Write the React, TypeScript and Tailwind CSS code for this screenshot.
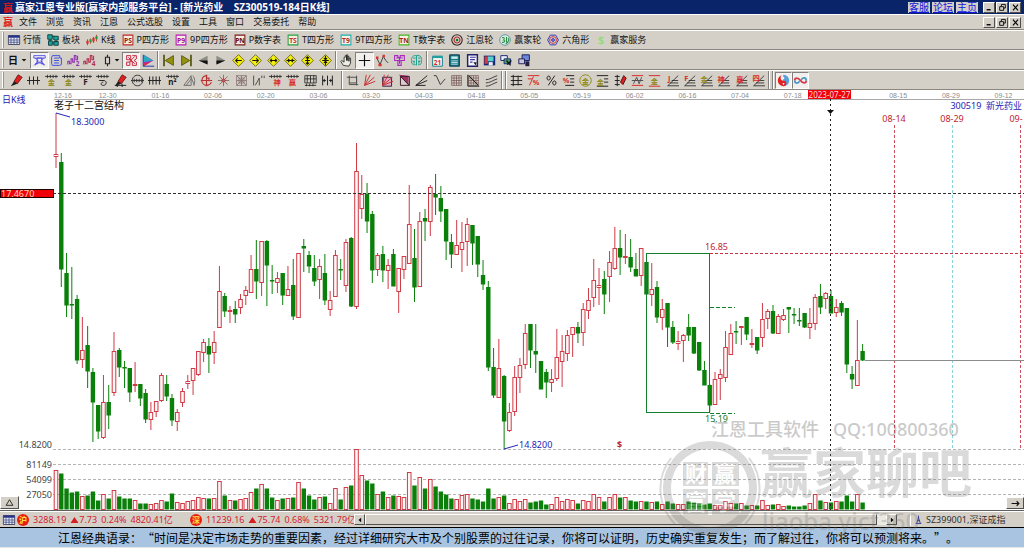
import React from 'react';

type Part = { d?: string; c?: string; f?: string; w?: number; t?: string; x?: number; y?: number; s?: number };
type Tool = { label: string; parts: Part[]; pressed?: boolean };

const K = '#222222';
const RED = '#d92a2a';
const OLIVE = '#8f8a18';

const sans = "font-['Noto_Sans','Noto_Sans_CJK_SC',sans-serif]";
const cjk = "font-['Noto_Sans_CJK_SC',sans-serif]";

const Icon: React.FC<{ parts: Part[]; className?: string }> = ({ parts, className = 'h-[14px] w-[14px]' }) => (
  <svg viewBox="0 0 16 16" className={`shrink-0 overflow-visible ${className}`} aria-hidden="true">
    {parts.map((p, i) =>
      p.t ? (
        <text key={i} x={p.x ?? 8} y={p.y ?? 12} fontSize={p.s ?? 9} fontWeight="bold" textAnchor="middle" fill={p.c ?? K}>
          {p.t}
        </text>
      ) : (
        <path key={i} d={p.d} fill={p.f ?? 'none'} stroke={p.c ?? 'none'} strokeWidth={p.w ?? 1.2} />
      )
    )}
  </svg>
);

const boxed = (t: string, border: string, color: string): Part[] => [
  { d: 'M1.5 1.5h13v13h-13z', c: border, f: '#f6efe2', w: 1.4 },
  { t, c: color, y: 11.5, s: 9 },
];

const diamond = (d: string): Part[] => [
  { d: 'M8 .8L15.2 8L8 15.2L.8 8z', c: '#5e5c00', f: '#f4ef10', w: 1 },
  { d, c: '#111111', w: 1.3 },
];

const comb: Part = { d: 'M0 3h16M3 1v4M6.5 1v4M10 1v4M13.5 1v4', c: K, w: 1 };
const fan: Part = { d: 'M2 14.5h14M2 14.5L15 2M5 11h10M7 8h8', c: K, w: 1 };

const gridIcon: Part[] = [
  { d: 'M.5 2h15v12h-15z', c: '#222244', f: '#e8ecf4', w: 1 },
  { d: 'M.5 2h15v3h-15z', f: '#24328c' },
  { d: 'M4 5v9M8 5v9M12 5v9M1 8h14M1 11h14', c: '#3b4a86', w: 1 },
];

const quickLinks: Tool[] = [
  { label: '行情', parts: gridIcon },
  {
    label: '板块',
    parts: [
      { d: 'M1 1h6v6H1zM9 3h6v5H9zM2 9h5v6H2zM9 10h6v5H9z', c: '#0b3c3c', f: '#19a7a0' },
      { d: 'M7 3h3M4 7v3M7 12h3M12 8v3', c: '#0b3c3c', w: 1.5 },
    ],
  },
  {
    label: 'K线',
    parts: [
      { d: 'M2 7v8M6 6v7M10 4v8M14 1v9', c: '#b0281c', w: 1 },
      { d: 'M.5 9h3v4h-3zM8.500 5h3v5h-3z', f: '#e02a2a' },
      { d: 'M4.500 7h3v4h-3zM12.500 3h3v4h-3z', f: '#16a03a' },
    ],
  },
  { label: 'P四方形', parts: boxed('PS', '#c02828', '#8a1c1c') },
  { label: '9P四方形', parts: boxed('P9', '#b818b8', '#a01090') },
  { label: 'P数字表', parts: boxed('PN', '#7c1c1c', '#6c1010') },
  { label: 'T四方形', parts: boxed('TS', '#22a444', '#c03424') },
  { label: '9T四方形', parts: boxed('T9', '#18b0b0', '#b02828') },
  { label: 'T数字表', parts: boxed('TN', '#48b428', '#a02020') },
  {
    label: '江恩轮',
    parts: [
      { d: 'M8 1a7 7 0 1 0 .01 0z', c: '#3a2a2a', w: 1.4 },
      { d: 'M8 4a4 4 0 1 0 .01 0z', c: '#b02020', w: 1.4 },
      { d: 'M8 7a1 1 0 1 0 .01 0z', c: '#187028', w: 1.6 },
    ],
  },
  {
    label: '赢家轮',
    parts: [
      { d: 'M8 1a7 7 0 1 0 .01 0z', c: '#4c8c9c', f: '#dcebdc', w: 1.2 },
      { d: 'M4 5c3-1 4 1 2 3c3 0 2 4-2 3M10 4v7M12 5c2 2 1 6-3 8', c: '#2c8c4c', w: 1.4 },
    ],
  },
  {
    label: '六角形',
    parts: [
      { d: 'M4.5 1.5h7L15.2 8l-3.7 6.5h-7L.8 8z', c: '#3838b8', w: 1.3 },
      { d: 'M8 3.5a4.5 4.5 0 1 0 .01 0z', c: '#d03030', w: 1.3 },
      { d: 'M8 6a2 2 0 1 0 .01 0z', c: '#3838b8', f: '#7070e0', w: 1.2 },
    ],
  },
  { label: '赢家服务', parts: [{ t: '$', c: '#8fdc84', y: 13, s: 14 }] },
];

const periodTools: Tool[] = [
  {
    label: '叠加',
    pressed: true,
    parts: [{ d: 'M1 2h14v3H1zM3 5l3 3l-3 6M13 5l-3 3l3 6M5 5h6v5H5zM3 12h3M10 12h3M1 14c3-4 11-4 14 0', c: '#3c3ce0', w: 1 }],
  },
  { label: '信息', parts: [{ d: 'M3 2h9v3h2v8l-2 1H3l-1-2V4zM5 5h6M5 8h6M5 11h6', c: '#3c50e0' }] },
  {
    label: '波段2',
    parts: [
      { d: 'M1 13V9h2v3h2V6h2v4h2V2h2v5h2V2', c: '#9030b0', w: 1.3 },
      { t: '2', c: '#9030b0', x: 13, y: 15, s: 8 },
    ],
  },
  {
    label: '波段4',
    parts: [
      { d: 'M1 13V9h2v3h2V6h2v4h2V2h2v5h2V2', c: '#b03050', w: 1.3 },
      { t: '4', c: '#b03050', x: 13, y: 15, s: 8 },
    ],
  },
];

const shapeTools: Tool[] = [
  {
    label: '图形',
    pressed: true,
    parts: [{ d: 'M2 2h5v5H2zM9 2h5v4l-3 2l3 2v4H9V9H6v5H2v-4h4M4 4l8 8M12 3l-6 6', c: '#c82840', w: 1.2 }],
  },
  {
    label: '江恩角',
    parts: [
      { d: 'M2 15V1l12 7z', f: '#b428b4' },
      { d: 'M2 1l12 7l-12 2z', f: '#28a8c0' },
      { d: 'M2 12l8-2l-8 5z', f: '#e03030' },
      { d: 'M1.5 1v14H15', c: '#2838b0' },
    ],
  },
];

const moveTools: Tool[] = [
  { label: '首根', parts: [{ d: 'M2.5 1v14', c: '#4c4c00', w: 2 }, { d: 'M14 2v12L4 8z', c: '#4c4c00', f: '#929210', w: 1 }] },
  { label: '末根', parts: [{ d: 'M13.5 1v14', c: '#4c4c00', w: 2 }, { d: 'M2 2v12L12 8z', c: '#4c4c00', f: '#929210', w: 1 }] },
  { label: '前移', parts: [{ d: 'M13 2v11L2 8z', f: '#8c8c84' }, { d: 'M2 8h11v5z', f: '#111111' }] },
  { label: '后移', parts: [{ d: 'M3 2v11l11-5z', f: '#8c8c84' }, { d: 'M3 8h11L3 13z', f: '#111111' }] },
  { label: '左', parts: diamond('M12 8H5M7 5.500L4.500 8L7 10.500') },
  { label: '右', parts: diamond('M4 8h7M9 5.500L11.500 8L9 10.500') },
  { label: '横向放大', parts: diamond('M4 8h8M6 6L4 8l2 2M10 6l2 2l-2 2') },
  { label: '横向缩小', parts: diamond('M3 8h10M5 6l2 2l-2 2M11 6L9 8l2 2') },
  { label: '纵向放大', parts: diamond('M8 3v10M6 5.500l2-2l2 2M6 10.500l2 2l2-2M5 8h6') },
  { label: '纵向缩小', parts: diamond('M8 2v12M6 5l2 2l2-2M6 11l2-2l2 2M4 8h8') },
];

const viewTools: Tool[] = [
  { label: '拖动', parts: [{ d: 'M4 14L1 9l1-1l3 2V4h1.500V2H8v6V1h1.500v7V3H11v6V5h2v6l-2 4z', c: K, f: '#efece4', w: 1 }] },
  { label: '十字光标', pressed: true, parts: [{ d: 'M8 1v14M1 8h14', c: '#111111', w: 1.4 }] },
  {
    label: '折线',
    parts: [
      { d: 'M1 5l4 8l4-10l3 5l3 3', c: '#404040' },
      { d: 'M3 12h4v3H3zM8 1h3v3H8zM0 3h3v3H0z', f: '#e03030' },
    ],
  },
  { label: '区域', parts: [{ d: 'M2 2h4v2h3V2h5v6h-4v6H6V8H2zM4 5h8M8 5v7M5 8h6', c: '#a828c0', w: 1.3 }] },
  {
    label: '脑图',
    parts: [{ d: 'M8 2C4 1 1 5 2 8c-1 3 1 6 5 5M8 2c5-1 7 3 6 6c1 3-1 6-4 5M8 2v12M4 5h3M3 9h3M10 5h3M10 9h3M5 12V9M11 12V8', c: '#18a090', w: 1.2 }],
  },
];

const windowTools: Tool[] = [
  {
    label: '日历',
    parts: [
      { d: 'M2 3h12v12H2z', c: '#188088', f: '#f4f4f0' },
      { d: 'M2 2h12v3H2z', f: '#20a0a0' },
      { t: '21', c: RED, y: 13, s: 8 },
    ],
  },
  { label: '计算器', parts: [{ d: 'M2 1h12v14H2z', c: '#103850', f: '#187888' }, { d: 'M4 3h8v3H4z', f: '#c8f0e8' }, { d: 'M4 8.500h8M4 10.500h8M4 12.500h8', c: '#e0f4f4', w: 1 }] },
  { label: '列表', parts: [{ d: 'M2 1h12v14H2z', c: '#20206c', f: '#f4f4f8', w: 1.8 }, { d: 'M5 4h7M5 7h6M5 10h3', c: '#4038a0', w: 1.4 }, { d: 'M9 10l3 4l1-4z', f: '#202020' }] },
  { label: '保存', parts: [{ d: 'M1 2h14v12H1z', f: '#182878' }, { d: 'M2 3h4v9H2z', f: '#e03838' }, { d: 'M6 3h7v6H6z', f: '#58d0d0' }, { d: 'M7 10h5v4H7z', f: '#f0f0f0' }] },
  { label: '联网', parts: [{ d: 'M1 2h8v6H1z', c: '#202878', f: '#e8f0f8' }, { d: 'M5 6h8v6H5z', c: '#202878', f: '#48a060' }, { d: 'M8 8l5 6M14 8l-5 5', c: '#101010', w: 1.5 }] },
  { label: '锁屏', parts: [{ d: 'M5 1h9v7H5z', c: '#202060', f: '#6888d8' }, { d: 'M1 6h7v6H1z', c: '#202060', f: '#c8c8d8' }, { d: 'M9 9h5v6H9z', f: '#202040' }] },
];

const pen: Part[] = [
  { d: 'M5 9L10 1l5 3l-6 8z', c: '#601010', f: '#e02020', w: 1 },
  { d: 'M5 9l4 3l-8 3z', f: '#202020' },
];
const rays: Part = { d: 'M2 14L4 1M2 14L9 1M2 14L14 4M2 14L15 9', c: '#c83030' };
const mesh: Part = { d: 'M2 2h12v12H2zM2 5h12M2 8h12M2 11h12M5 2v12M8 2v12M11 2v12', c: '#6c4848', w: 0.8 };

const drawTools: Tool[] = [
  { label: '画笔', parts: pen },
  { label: '时间线', parts: [{ d: 'M0 8h16M3 3v10M8 3v10M13 3v10', c: K }] },
  { label: '金时间', parts: [comb, { t: '金', c: OLIVE, y: 14 }] },
  { label: '金时间二', parts: [comb, { t: '金', c: OLIVE, y: 14 }] },
  { label: '斐波那契', parts: [comb, { t: 'F', y: 14, s: 10 }] },
  { label: '螺旋', parts: [comb, { d: 'M4 8h6c4 1 3 6-1 6s-3-4 0-4', c: K }] },
  { label: '标记', parts: [...pen, { d: 'M1 14h14M4 12v4M10 12v4', c: K }] },
  { label: '圆周', parts: [{ d: 'M8 1.500a6.500 6.500 0 1 0 .01 0zM0 8h16M4 6v4M7 6v4M10 6v4M13 6v4', c: '#383838' }] },
  { label: '等分线', parts: [{ d: 'M0 8h16M2 3v10M6 3v10M10 3v10M14 3v10', c: K }] },
  { label: '平方', parts: [comb, { t: 'n²', y: 14, s: 10 }] },
  { label: '三角', parts: [{ d: 'M1 14L10 2v12zM10 4l4 10M4 14l6-8M12 2c3 3 3 9 1 12', c: '#707070' }] },
  { label: '圆靶', parts: [{ d: 'M9 2a6 6 0 1 0 5 8M1 8h14M8 1v14M8 5h3v4', c: '#b83030', w: 1.4 }] },
  { label: '星形', parts: [{ d: 'M8 1v14M1 8h14M3 3l10 10M13 3L3 13', c: '#8c7070' }, { d: 'M8 6a2 2 0 1 0 .01 0z', c: RED }] },
  { label: '方格星', parts: [{ d: 'M2 2h12v12H2zM2 2l12 12M14 2L2 14M8 2v12M2 8h12M5 5h6v6H5z', c: '#806868', w: 0.9 }] },
  { label: '数列', parts: [{ d: 'M2 2v12M4 14L9 5v9M12 2v3M15 2v3', c: '#505050' }] },
  { label: '神数', parts: [comb, { t: '神', c: RED, x: 10, y: 14 }] },
  { label: '赢数', parts: [comb, { t: '赢', c: RED, y: 14 }] },
  { label: '时间格', parts: [{ d: 'M1 2h14v9H1zM1 6h14M4 2v9M8 2v9M12 2v9M1 14h14M3 12v3M7 12v3M11 12v3', c: K, w: 1 }] },
  { label: '对称', parts: [{ d: 'M2 2v12M8 2v12M14 2v12M2 8h4M14 8h-4M4 6v4M12 6v4', c: K }] },
];

const angleTools: Tool[] = [
  { label: '矩形', parts: [{ d: 'M4 2v11h11M1 4h12v7H4M13 2v12', c: '#505050' }] },
  { label: '放射线', parts: [rays] },
  { label: '角度框', parts: [{ d: 'M2 4h11v11H2z', c: '#302040', f: '#e0b0c8' }, rays] },
  { label: '角度块', parts: [{ d: 'M1 1l12 1v12z', f: '#a03060' }, { d: 'M3 3h11v11H3zM3 3l11 11', c: '#402030' }] },
  { label: '速度线', parts: [{ d: 'M1 14L15 2M1 14L15 8M1 14h12', c: K }] },
  { label: '波浪', parts: [{ d: 'M1 2h3l5 11l6-7', c: '#404040' }] },
  { label: '网格', parts: [mesh] },
  { label: '网格角', parts: [mesh, { d: 'M1 1v14h14M2 2l12 12', c: K }] },
  { label: '平行线', parts: [{ d: 'M1 7c5 0 8-3 14-5M1 11c5 0 8-3 14-5M1 15c5 0 8-3 14-5', c: '#404040' }] },
];

const priceTools: Tool[] = [
  { label: '价格线', parts: [{ d: 'M4 1v14M1 3h14M1 8h14M1 13h14M10 2v12', c: K }] },
  { label: '回撤', parts: [{ d: 'M1 2h14M3 14L8 3M1 6h5', c: RED }, { t: '%', c: RED, x: 11, y: 14 }] },
  { label: '百分比', parts: [{ d: 'M12 2L4 14M4.500 2.500a2 2.500 0 1 0 .01 0zM11.500 8.500a2 2.500 0 1 0 .01 0z', c: K }] },
  { label: '百分线', parts: [{ d: 'M5 2h10M10 6h5M10 10h5M4 14h11', c: K }, { t: '%', c: RED, x: 5, y: 11 }] },
  { label: '金圆', parts: [{ d: 'M8 1a7 7 0 1 0 .01 0z', c: OLIVE }, { t: '金', c: OLIVE, y: 12 }] },
  { label: '金线', parts: [{ d: 'M1 2h14M10 6h5M10 10h5M1 15h14', c: K }, { t: '金', c: OLIVE, x: 5.5, y: 13 }] },
  { label: '画价', parts: [{ d: 'M4 1v14M1 3h6M1 8h6M1 13h6', c: K }, { d: 'M8 10L12 2l3 3l-4 8z', c: '#501010', f: '#e02020' }] },
  { label: '区间', parts: [{ d: 'M1 2h14M1 14h14', c: RED }, { d: 'M1 8h14M3 12L7 4l3 8l3-8', c: '#505050' }] },
  { label: '金区间', parts: [{ d: 'M1 2h14M1 15h14', c: RED }, { t: '金', c: OLIVE, y: 12.5 }] },
  { label: 'J线', parts: [fan, { t: 'J', c: RED, x: 4, y: 9 }] },
  { label: 'F线', parts: [fan, { t: 'F', c: RED, x: 4, y: 9 }] },
  { label: '金扇', parts: [fan, { t: '金', c: OLIVE, x: 5, y: 10 }] },
  { label: '神扇', parts: [fan, { t: '神', c: RED, x: 5, y: 10 }] },
  { label: '赢扇', parts: [fan, { t: '赢', c: RED, x: 6, y: 10 }] },
  { label: '四扇', parts: [fan, { t: '四', c: RED, x: 5, y: 9 }] },
];

const lastTools: Tool[] = [
  {
    label: '太极',
    pressed: true,
    parts: [
      { d: 'M8 1a7 7 0 0 1 0 14z', f: '#58a0dc' },
      { d: 'M8 1a7 7 0 0 0 0 14a3.500 3.500 0 0 0 0-7a3.500 3.500 0 0 1 0-7z', f: '#e02424' },
      { d: 'M8 1a3.500 3.500 0 0 1 0 7z', f: '#58a0dc' },
      { d: 'M8 4a1 1 0 1 0 .01 0zM8 11a1 1 0 1 0 .01 0z', f: '#ffffff' },
    ],
  },
  {
    label: '循环',
    pressed: true,
    parts: [
      { d: 'M15 8c0 4-4 4-7 0C5 4 1 4 1 8', c: '#d83848', w: 2.2 },
      { d: 'M1 8c0 4 4 4 6 1M9 7c2-3 6-3 6 1', c: '#4898c8', w: 2.2 },
    ],
  },
];

const dates = ['12-16', '12-30', '01-16', '02-06', '02-20', '03-06', '03-20', '04-03', '04-18', '05-05', '05-19', '06-02', '06-16', '07-04', '07-18', '', '08-15', '08-29', '09-12'];

// up, high, body top, body bottom, low, volume
const candles: number[][] = [
  [1, 113, 154, 156, 168, 39], [0, 153, 162, 269, 287, 36], [0, 253, 273, 305, 317, 21], [0, 267, 304, 305, 319, 17],
  [0, 295, 299, 360, 364, 18], [1, 317, 350, 359, 368, 13], [0, 326, 345, 371, 388, 14], [0, 368, 372, 402, 442, 18],
  [0, 405, 405, 431, 439, 9], [1, 375, 402, 437, 439, 15], [0, 385, 402, 415, 429, 11], [1, 332, 351, 392, 396, 19],
  [0, 348, 350, 367, 377, 13], [0, 361, 367, 368, 388, 11], [0, 368, 368, 392, 402, 11], [1, 362, 384, 385, 392, 9],
  [0, 384, 384, 398, 406, 6], [0, 389, 393, 419, 423, 6], [1, 402, 412, 419, 430, 5], [1, 401, 401, 411, 417, 6],
  [1, 373, 375, 400, 402, 9], [0, 375, 384, 396, 401, 8], [0, 394, 398, 420, 426, 16], [1, 409, 412, 421, 431, 7],
  [1, 388, 391, 402, 407, 6], [1, 375, 381, 383, 389, 8], [1, 368, 368, 380, 395, 9], [1, 351, 351, 374, 376, 12],
  [1, 339, 342, 352, 362, 11], [0, 338, 346, 354, 373, 11], [1, 331, 342, 352, 364, 11], [1, 266, 291, 327, 328, 28],
  [0, 293, 296, 311, 317, 14], [1, 306, 310, 311, 323, 9], [0, 301, 309, 314, 323, 9], [1, 294, 299, 307, 314, 10],
  [1, 286, 290, 295, 305, 11], [1, 255, 269, 292, 293, 17], [0, 240, 269, 281, 299, 21], [1, 241, 241, 282, 296, 25],
  [0, 240, 241, 265, 306, 21], [0, 265, 280, 281, 294, 12], [1, 272, 278, 282, 293, 9], [0, 273, 273, 295, 305, 11],
  [1, 266, 289, 295, 296, 11], [0, 259, 285, 316, 320, 12], [1, 253, 253, 317, 318, 27], [0, 239, 246, 248, 272, 21],
  [0, 251, 255, 266, 273, 14], [0, 255, 268, 281, 286, 10], [1, 259, 266, 279, 299, 12], [0, 254, 273, 300, 305, 13],
  [1, 291, 300, 309, 316, 6], [1, 250, 255, 296, 297, 21], [0, 259, 269, 270, 280, 10], [1, 239, 242, 285, 292, 22],
  [0, 237, 238, 306, 307, 24], [1, 143, 171, 306, 309, 60], [1, 175, 194, 208, 219, 34], [0, 183, 194, 221, 233, 29],
  [0, 211, 214, 270, 283, 26], [1, 253, 255, 269, 276, 15], [0, 246, 254, 270, 282, 18], [1, 259, 265, 270, 289, 12],
  [0, 249, 254, 286, 286, 14], [1, 268, 268, 291, 313, 13], [1, 256, 256, 269, 279, 12], [1, 185, 224, 263, 264, 37],
  [0, 229, 258, 287, 302, 24], [1, 212, 221, 286, 287, 32], [0, 209, 218, 221, 241, 21], [1, 185, 187, 221, 236, 30],
  [0, 174, 194, 197, 215, 23], [0, 186, 198, 211, 222, 18], [0, 209, 209, 241, 260, 15], [0, 234, 242, 254, 268, 11],
  [1, 220, 245, 254, 255, 10], [1, 222, 242, 249, 272, 14], [1, 218, 224, 241, 266, 15], [0, 225, 225, 243, 265, 11],
  [0, 236, 236, 264, 277, 10], [0, 260, 275, 284, 290, 8], [0, 281, 287, 367, 371, 21], [0, 348, 367, 395, 398, 11],
  [1, 339, 368, 397, 397, 12], [0, 375, 376, 421, 449, 14], [1, 403, 412, 430, 432, 6], [1, 366, 377, 411, 416, 10],
  [1, 358, 365, 377, 393, 8], [1, 324, 333, 364, 369, 10], [0, 324, 324, 350, 368, 7], [0, 324, 351, 354, 373, 8],
  [0, 361, 361, 389, 389, 9], [0, 369, 372, 382, 398, 5], [1, 369, 379, 382, 392, 5], [1, 329, 357, 378, 381, 12],
  [1, 335, 351, 361, 387, 8], [1, 330, 335, 353, 361, 10], [1, 327, 327, 334, 357, 9], [0, 322, 327, 333, 343, 6],
  [1, 303, 309, 332, 346, 9], [1, 288, 300, 310, 319, 8], [1, 259, 280, 297, 307, 15], [1, 268, 285, 287, 305, 12],
  [0, 271, 279, 294, 314, 8], [1, 251, 262, 276, 302, 12], [1, 227, 248, 268, 270, 15], [0, 230, 248, 257, 275, 12],
  [1, 234, 256, 257, 264, 12], [0, 239, 257, 267, 272, 9], [0, 253, 269, 276, 276, 8], [1, 248, 248, 275, 286, 8],
  [0, 254, 262, 294, 294, 8], [1, 263, 289, 294, 306, 7], [0, 281, 287, 317, 323, 8], [1, 299, 309, 317, 330, 5],
  [0, 303, 303, 327, 347, 8], [0, 321, 327, 342, 344, 6], [1, 331, 341, 343, 350, 5], [1, 334, 335, 340, 362, 5],
  [0, 314, 327, 335, 341, 8], [0, 327, 327, 353, 354, 7], [0, 342, 342, 370, 371, 6], [0, 361, 370, 385, 385, 5],
  [0, 384, 385, 405, 412, 6], [1, 372, 379, 404, 405, 4], [1, 369, 374, 378, 400, 4], [1, 331, 347, 377, 382, 8],
  [1, 324, 333, 354, 355, 6], [0, 321, 331, 332, 344, 6], [1, 326, 326, 327, 345, 6], [0, 317, 317, 334, 340, 4],
  [1, 329, 343, 344, 348, 4], [0, 337, 337, 350, 354, 4], [1, 303, 319, 337, 347, 9], [1, 309, 311, 318, 329, 4],
  [0, 305, 311, 333, 334, 5], [1, 314, 316, 333, 334, 5], [1, 309, 315, 319, 321, 3], [0, 307, 307, 309, 333, 4],
  [0, 308, 314, 315, 324, 3], [0, 308, 320, 321, 326, 3], [0, 313, 313, 327, 328, 4], [1, 308, 323, 327, 339, 6],
  [1, 294, 297, 323, 330, 15], [0, 284, 296, 307, 314, 9], [1, 292, 293, 298, 309, 7], [0, 290, 296, 313, 313, 7],
  [1, 299, 307, 312, 317, 8], [0, 301, 303, 312, 316, 8], [0, 308, 308, 364, 373, 14], [0, 366, 374, 379, 389, 8],
  [1, 320, 360, 385, 386, 15], [0, 344, 351, 360, 361, 7],
];

const ToolButton: React.FC<{ tool: Tool }> = ({ tool }) => (
  <button
    aria-label={tool.label}
    className={`flex h-[17px] flex-1 items-center justify-center ${
      tool.pressed ? 'border border-t-[#808080] border-r-white border-b-white border-l-[#808080] bg-[#f2f0ec]' : ''
    }`}
  >
    <Icon parts={tool.parts} className="h-[13px] w-[13px]" />
  </button>
);

const Divider = () => <span className="mx-px h-[18px] w-[2px] shrink-0 border-l border-l-[#808080] bg-white" />;

const Grip = () => <span className="mr-1 h-[16px] w-[2px] shrink-0 border-l border-l-white bg-[#9a968c]" />;

const raised = 'border border-t-white border-r-[#505050] border-b-[#505050] border-l-white bg-[#d4d0c8]';

const WindowButtons = () => (
  <div className="flex gap-px">
    {[
      { label: '最小化', d: 'M3 12h7', w: 2.5 },
      { label: '还原', d: 'M6 6V2.500h7V9h-3M3 6.500h7V13H3z', w: 1.6 },
      { label: '关闭', d: 'M3.500 3l9 10M12.500 3l-9 10', w: 2 },
    ].map((b) => (
      <button key={b.label} aria-label={b.label} className={`flex h-[11px] w-[12px] items-center justify-center ${raised}`}>
        <Icon parts={[{ d: b.d, c: '#000000', w: b.w }]} className="h-[9px] w-[9px]" />
      </button>
    ))}
  </div>
);

const TitleBar = () => (
  <header className="flex h-[14px] items-center bg-[#0a246a] px-[3px] text-white">
    <span className={`mr-[2px] text-[10px] font-bold leading-[13px] text-[#e01818] ${cjk}`}>赢</span>
    <h1 className="flex-1 text-[10px] font-bold leading-[13px] whitespace-pre">
      赢家江恩专业版[赢家内部服务平台] - [新光药业{'    '}SZ300519-184日K线]
    </h1>
    <nav className="mr-[5px] flex gap-[2px]">
      {['客服', '论坛', '主页'].map((t) => (
        <a key={t} href="#" className="bg-[#d4d0c8] px-px text-[10px] leading-[11px] text-[#1414e0] underline">
          {t}
        </a>
      ))}
    </nav>
    <WindowButtons />
  </header>
);

const MenuBar = () => (
  <div className="flex h-[16px] items-center border-t border-b border-t-white border-b-[#8c8880] px-[3px]">
    <span className={`mr-[6px] text-[10px] font-bold leading-[14px] text-[#e01818] ${cjk}`}>赢</span>
    <nav className="flex flex-1 gap-[9px]">
      {['文件', '浏览', '资讯', '江恩', '公式选股', '设置', '工具', '窗口', '交易委托', '帮助'].map((t) => (
        <button key={t} className="leading-[14px]">
          {t}
        </button>
      ))}
    </nav>
    <WindowButtons />
  </div>
);

const rowClass = 'flex h-[20px] items-center overflow-hidden border-t border-b border-t-white border-b-[#8c8880] px-[2px]';

const Toolbars = () => (
  <>
    <div className={rowClass}>
      <Grip />
      <div className="flex gap-[6px]">
        {quickLinks.map((q) => (
          <button key={q.label} className="flex items-center gap-[3px] whitespace-nowrap">
            <Icon parts={q.parts} className="h-[12px] w-[12px]" />
            {q.label}
          </button>
        ))}
      </div>
    </div>
    <div className={rowClass}>
      <Grip />
      <button className="flex w-[22px] items-center gap-[3px] text-[10px] font-bold">
        日
        <Icon parts={[{ d: 'M2 5h12L8 12z', f: '#111111' }]} className="h-[6px] w-[6px]" />
      </button>
      <div className="flex w-[68px]">{periodTools.map((t) => <ToolButton key={t.label} tool={t} />)}</div>
      <button aria-label="K线样式" className="flex w-[24px] items-center justify-center">
        <Icon parts={[{ d: 'M8 1v3M8 12v3M5.500 4h5v8h-5z', c: K, w: 1.4 }]} className="h-[13px] w-[13px]" />
        <Icon parts={[{ d: 'M2 5h12L8 12z', f: '#111111' }]} className="h-[6px] w-[6px]" />
      </button>
      <div className="flex w-[34px]">{shapeTools.map((t) => <ToolButton key={t.label} tool={t} />)}</div>
      <Divider />
      <div className="flex w-[174px]">{moveTools.map((t) => <ToolButton key={t.label} tool={t} />)}</div>
      <Divider />
      <div className="flex w-[87px]">{viewTools.map((t) => <ToolButton key={t.label} tool={t} />)}</div>
      <Divider />
      <div className="flex w-[104px]">{windowTools.map((t) => <ToolButton key={t.label} tool={t} />)}</div>
    </div>
    <div className={rowClass}>
      <Grip />
      <div className="mr-1 flex w-[328px]">{drawTools.map((t) => <ToolButton key={t.label} tool={t} />)}</div>
      <Divider />
      <div className="flex w-[156px]">{angleTools.map((t) => <ToolButton key={t.label} tool={t} />)}</div>
      <Divider />
      <Divider />
      <div className="flex w-[259px]">{priceTools.map((t) => <ToolButton key={t.label} tool={t} />)}</div>
      <Divider />
      <Divider />
      <div className="flex w-[34px]">{lastTools.map((t) => <ToolButton key={t.label} tool={t} />)}</div>
    </div>
  </>
);

const Candle: React.FC<{ data: number[]; index: number }> = ({ data, index }) => {
  const [up, high, top, bottom, low, volume] = data;
  const x = 56 + index * 5.272;
  const body = Math.max(bottom - top, 1);
  if (up) {
    return (
      <g stroke="#cf3a46" fill="#fff6f6" strokeWidth="1">
        <path d={`M${x} ${high}V${top}M${x} ${bottom}V${low}`} />
        <rect x={x - 1.8} y={top + 0.5} width="3.6" height={body} />
        <rect x={x - 1.8} y={509.5 - volume} width="3.6" height={volume} />
      </g>
    );
  }
  return (
    <g fill="#0a800a">
      <rect x={x - 0.5} y={high} width="1" height={low - high} />
      <rect x={x - 2.2} y={top} width="4.4" height={body + 0.5} />
      <rect x={x - 2.2} y={509.5 - volume} width="4.4" height={volume} />
    </g>
  );
};

const Chart = () => (
  <svg viewBox="0 90 1024 422" className={`block w-full bg-white ${sans}`} role="img" aria-label="日K线">
    <path d="M54 99.500H1024" stroke="#a8a8a8" />
    <g fontSize="7" fill="#8c8c8c" className="font-['Liberation_Sans',sans-serif]">
      {dates.map((d, i) => (
        <text key={i} x={i === 0 ? 54 : 46 + i * 52.7} y="97.500">
          {d}
        </text>
      ))}
    </g>
    <rect x="808" y="90" width="43" height="9" fill="#f00008" />
    <text x="829.500" y="98" fontSize="8" textAnchor="middle" fill="#ffd8d8">2023-07-27</text>
    <text x="2" y="103" fontSize="9" fill="#2424b4">日K线</text>
    <text x="54" y="109" fontSize="10" fill="#111111">老子十二宫结构</text>
    <text x="1022" y="109" fontSize="9" textAnchor="end" fill="#2424b4" xmlSpace="preserve">300519  新光药业</text>

    <g stroke="#b4b4b4" strokeDasharray="3 2">
      <path d="M53 449.500H1024M53 464.500H1024M53 479.500H1024M53 494.500H1024" />
    </g>
    <g fontSize="9" fill="#444444" textAnchor="end">
      <text x="52" y="448">14.8200</text>
      <text x="52" y="468">81149</text>
      <text x="52" y="483">54099</text>
      <text x="52" y="498">27050</text>
    </g>

    <path d="M894.500 125V448M1020.500 125V448" stroke="#cc5060" strokeDasharray="3 2" />
    <path d="M952.500 125V448" stroke="#8cd4dc" strokeDasharray="3 2" />
    <g fontSize="9" fill="#c02430" textAnchor="middle">
      <text x="894" y="122">08-14</text>
      <text x="952" y="122">08-29</text>
      <text x="1016" y="122">09-</text>
    </g>

    {candles.map((c, i) => (
      <Candle key={i} data={c} index={i} />
    ))}

    <g fill="none" stroke="#14802c">
      <rect x="646.500" y="253.500" width="63" height="159" />
      <path d="M710 307.500h25M710 413.500h25" strokeDasharray="4 2" />
    </g>
    <path d="M710 253.500H1024" stroke="#cc3040" strokeDasharray="3 2" />
    <path d="M865 360.500H1024" stroke="#8c8c8c" />
    <text x="705" y="250" fontSize="9" fill="#c02430">16.85</text>
    <text x="705" y="422" fontSize="9" fill="#14802c">15.19</text>
    <text x="617" y="448" fontSize="9" fontWeight="bold" fill="#c02430">$</text>

    <g fontSize="9" fill="#2424b4">
      <path d="M56 113l14 4M504 449l14-4" stroke="#2424b4" fill="none" />
      <text x="71" y="125">18.3000</text>
      <text x="519" y="448">14.8200</text>
    </g>

    <path d="M53 193.500H1024" stroke="#303030" strokeDasharray="3 2" />
    <path d="M830.500 99V510" stroke="#202020" strokeDasharray="2 3" />
    <path d="M827 110h7l-3.500 4z" fill="#101010" />
    <rect x="0.500" y="189.500" width="53" height="8" fill="#f00008" stroke="#200000" />
    <text x="1" y="197" fontSize="9" fill="#ffd8b8">17.4670</text>
    <path d="M0 510.500H1024" stroke="#606060" />
  </svg>
);

const Quote: React.FC<{ badge: string; price: string; change: string; percent: string; amount: string }> = ({ badge, price, change, percent, amount }) => (
  <div className="flex items-center gap-[4px] whitespace-nowrap text-[#d42030]">
    <span className="flex h-[12px] w-[12px] items-center justify-center rounded-full bg-[#e81c10] text-[8px] font-bold leading-none text-[#ffe040]">
      {badge}
    </span>
    <span>{price}</span>
    <span className="flex items-center">
      <Icon parts={[{ d: 'M8 2L16 14H0z', f: '#d42020' }]} className="h-[8px] w-[9px]" />
      {change}
    </span>
    <span>{percent}</span>
    <span>{amount}</span>
  </div>
);

const StatusBar = () => (
  <div className="flex h-[16px] items-center border-b border-b-black bg-[#d4d0c8]">
    <div className="flex w-[354px] shrink-0 items-center gap-[2px] overflow-hidden pl-[3px]">
      <Icon parts={gridIcon} className="h-[12px] w-[12px]" />
      <div className="w-[171px] shrink-0">
        <Quote badge="沪" price="3288.19" change="7.73" percent="0.24%" amount="4820.41亿" />
      </div>
      <Quote badge="深" price="11239.16" change="75.74" percent="0.68%" amount="5321.79亿" />
    </div>
    <div className="mr-[13px] flex h-[11px] flex-1 bg-[#ece9e2]">
      <button aria-label="向左滚动" className={`flex w-[11px] items-center justify-center ${raised}`}>
        <Icon parts={[{ d: 'M11 2v12L4 8z', f: '#000000' }]} className="h-[6px] w-[6px]" />
      </button>
      <div className={`flex-1 ${raised}`} />
      <div className="w-[9px]" />
      <button aria-label="向右滚动" className={`flex w-[11px] items-center justify-center ${raised}`}>
        <Icon parts={[{ d: 'M5 2v12l7-6z', f: '#000000' }]} className="h-[6px] w-[6px]" />
      </button>
    </div>
    <div className="flex w-[114px] items-center gap-[3px] border-l border-l-white pl-[3px] whitespace-nowrap text-[#303030]">
      <Icon parts={[{ d: 'M8 1v6M5 14L8 5l3 9M6 10h4M3 15h10', c: '#2c3490', w: 1.6 }]} className="h-[11px] w-[9px]" />
      SZ399001,深证成指
    </div>
  </div>
);

const Watermark = () => (
  <svg viewBox="0 0 1024 548" className={`pointer-events-none absolute inset-0 w-full opacity-25 ${sans}`} aria-hidden="true">
    <g fill="#707070">
      <g fontSize="18" fontWeight="500" fill="#303030">
        <text x="711" y="436">江恩工具软件</text>
        <text x="833" y="436">QQ:100800360</text>
      </g>
      <text x="760" y="493" fontSize="53" fontWeight="bold">赢家聊吧</text>
      <text x="762" y="530" fontSize="24" fontWeight="500">liaoba.yjcf360</text>
      <path d="M710 441a47 47 0 1 0 .01 0zM710 449a39 39 0 1 1-.01 0z" fillRule="evenodd" />
      <path d="M671 458a50 50 0 0 0 4 66M749 458a50 50 0 0 1-4 66" fill="none" stroke="#707070" strokeWidth="2" />
      <path d="M683 462h25v24h-25zM712 462h27v24h-27zM683 489h25v26h-25zM712 489h27v26h-27z" />
    </g>
    <g fill="#ffffff" fontSize="22" fontWeight="bold">
      <text x="685" y="482">财</text>
      <text x="714" y="482">赢</text>
      <text x="685" y="510">富</text>
      <text x="714" y="510">学</text>
    </g>
  </svg>
);

const App: React.FC = () => (
  <div lang="zh-CN" className={`relative w-full overflow-hidden bg-[#d4d0c8] text-[9px] text-[#111111] ${sans}`}>
    <TitleBar />
    <MenuBar />
    <Toolbars />
    <main className="relative">
      <Chart />
      <button aria-label="展开" className={`absolute bottom-[3px] left-0 flex h-[13px] w-[19px] items-center justify-center ${raised}`}>
        <Icon parts={[{ d: 'M8 3L14 13H2z', c: '#202020', w: 1.6 }]} className="h-[9px] w-[9px]" />
      </button>
      <button aria-label="右移" className={`absolute right-0 bottom-[3px] flex h-[12px] w-[18px] items-center justify-center ${raised}`}>
        <Icon parts={[{ d: 'M1 8h13M10 4l4 4l-4 4', c: '#101010', w: 2 }]} className="h-[9px] w-[9px]" />
      </button>
    </main>
    <StatusBar />
    <footer
      className={`h-[20px] border-b border-b-[#e8e8e8] bg-[#a8c4e0] pl-[58px] text-[12px] leading-[19px] whitespace-nowrap text-black [text-spacing-trim:space-all] ${cjk}`}
    >
      江恩经典语录：“时间是决定市场走势的重要因素，经过详细研究大市及个别股票的过往记录，你将可以证明，历史确实重复发生；而了解过往，你将可以预测将来。”。
    </footer>
    <Watermark />
  </div>
);

export default App;
